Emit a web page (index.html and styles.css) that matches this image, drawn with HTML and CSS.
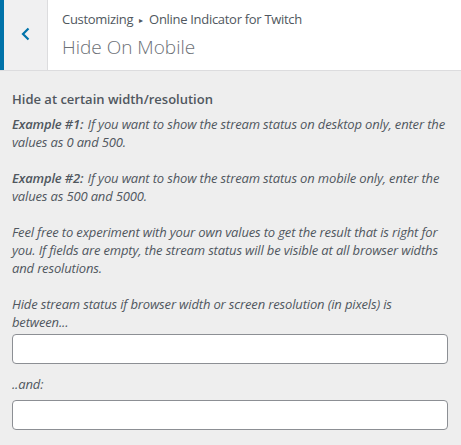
FILE: index.html
```html
<!DOCTYPE html>
<html lang="en">
<head>
<meta charset="utf-8">
<title>Hide On Mobile</title>
<link rel="stylesheet" href="styles.css">
</head>
<body>
<div class="panel">
  <header class="section-header">
    <button class="back" aria-label="Back">
      <svg width="12" height="14" viewBox="0 0 12 14"><path d="M8.5 1.5 L3 7 L8.5 12.5" fill="none" stroke="#0073aa" stroke-width="2.2"/></svg>
    </button>
    <div class="titles">
      <div class="crumb">Customizing <span class="arrow">&#9656;</span> Online Indicator for Twitch</div>
      <h1 class="title">Hide On Mobile</h1>
    </div>
  </header>
  <main class="content">
    <h2 class="heading">Hide at certain width/resolution</h2>
    <p class="desc"><b>Example #1:</b> If you want to show the stream status on desktop only, enter the values as 0 and 500.</p>
    <p class="desc"><b>Example #2:</b> If you want to show the stream status on mobile only, enter the values as 500 and 5000.</p>
    <p class="desc">Feel free to experiment with your own values to get the result that is right for you. If fields are empty, the stream status will be visible at all browser widths and resolutions.</p>
    <p class="desc label">Hide stream status if browser width or screen resolution (in pixels) is between...</p>
    <input class="field" type="text">
    <p class="desc label and">..and:</p>
    <input class="field" type="text">
  </main>
</div>
</body>
</html>
```
FILE: styles.css
```css
* { box-sizing: border-box; }
html, body { margin: 0; padding: 0; }
body {
  width: 461px;
  height: 445px;
  background: #eeeeee;
  font-family: "Open Sans", "Noto Sans", sans-serif;
  color: #50575e;
  overflow: hidden;
}
.section-header {
  display: flex;
  height: 71px;
  background: #fff;
  border-bottom: 1px solid #dcdcde;
}
.back {
  width: 48px;
  background: #f0f0f1;
  border: 0;
  border-left: 4px solid #0073aa;
  border-right: 1px solid #dcdcde;
  padding: 0 0 2px 0;
  display: flex;
  align-items: center;
  justify-content: center;
}
.titles {
  padding: 10px 0 0 14px;
}
.crumb {
  font-size: 13px;
  line-height: 18px;
  color: #50575e;
  letter-spacing: -0.3px;
}
.arrow {
  font-size: 8px;
  vertical-align: 1px;
  padding: 0 3px;
}
.title {
  margin: 5px 0 0 0;
  font-size: 19px;
  font-weight: 300;
  line-height: 26px;
  color: #6c7076;
}
.content {
  padding: 18px 12px 0 12px;
}
.heading {
  margin: 0 0 6px 0;
  font-size: 13px;
  font-weight: 600;
  line-height: 20px;
  color: #50575e;
}
.desc {
  margin: 0 0 18px 0;
  font-size: 13px;
  line-height: 18px;
  font-style: italic;
  letter-spacing: -0.15px;
}
.desc b { font-weight: 600; padding-right: 1px; }
.label { margin-bottom: 3px; }
.field {
  display: block;
  width: 436px;
  height: 30px;
  border: 1px solid #8c8f94;
  border-radius: 4px;
  background: #fff;
  margin: 0 0 11px 0;
}
.and { margin-bottom: 7px; }
```
